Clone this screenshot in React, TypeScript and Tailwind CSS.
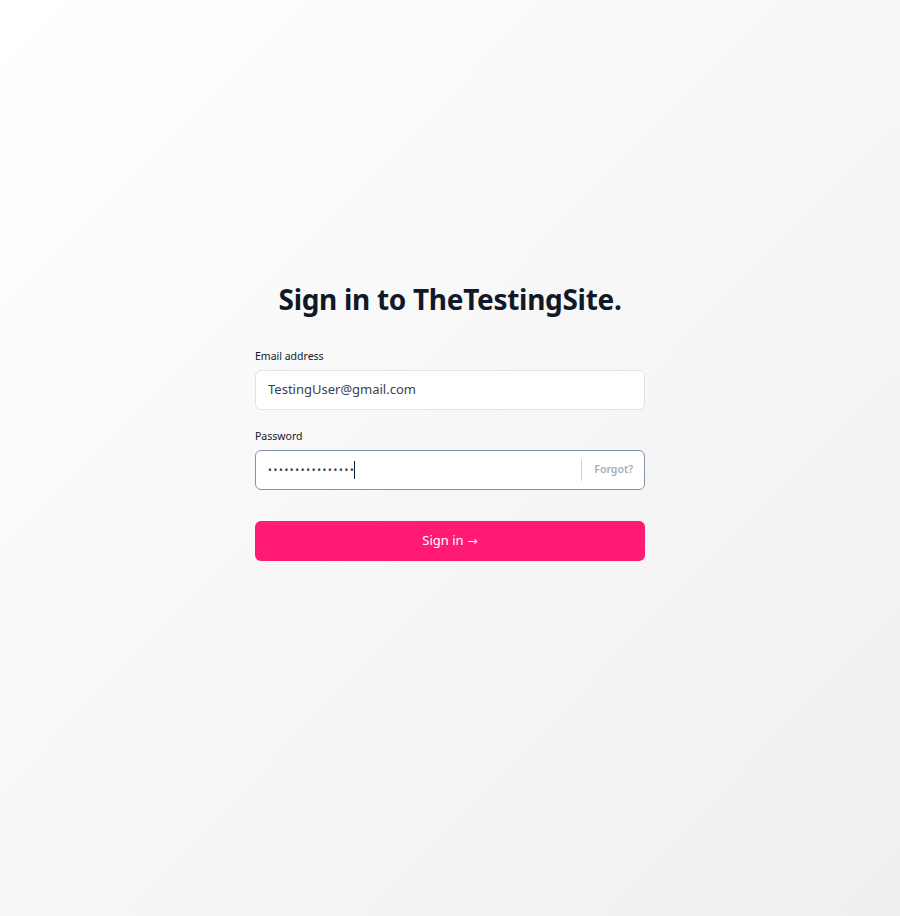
import React from "react";

export default function App() {
  return (
    <div
      className="min-h-[916px] w-full bg-gradient-to-br from-white to-[#efefef] flex flex-col items-center pt-[281px]"
      style={{ fontFamily: '"Noto Sans", "Open Sans", sans-serif' }}
    >
      <h1 className="text-[28px] leading-[36px] font-bold text-[#111827] tracking-[-0.3px]">
        Sign in to TheTestingSite.
      </h1>
      <form className="w-[390px] mt-[31px] flex flex-col" onSubmit={(e) => e.preventDefault()}>
        <label className="text-[10.5px] leading-[16px] text-[#111827]">Email address</label>
        <div className="mt-[6px] h-[40px] rounded-[6px] border border-[#e2e3e5] bg-white flex items-center px-[12px]">
          <span className="text-[13px] text-[#374151]">TestingUser@gmail.com</span>
        </div>
        <label className="mt-[18px] text-[10.5px] leading-[16px] text-[#111827]">Password</label>
        <div className="mt-[6px] h-[40px] rounded-[6px] border border-[#8392a5] bg-white flex items-center pl-[12px] pr-[11px]">
          <div className="flex-1 flex items-center">
            <span className="text-[10px] tracking-[1.7px] text-[#334155] leading-none">••••••••••••••••</span>
            <span className="w-[1px] h-[18px] bg-[#111827] ml-[-1px]" />
          </div>
          <span className="w-px h-[22px] bg-[#d1d5db] mr-[12px]" />
          <span className="text-[10.5px] font-semibold text-[#a7adb6]">Forgot?</span>
        </div>
        <button
          type="submit"
          className="mt-[31px] h-[40px] rounded-[6px] bg-[#ff1a74] text-white text-[13px] flex items-center justify-center gap-[4px]"
        >
          <span>Sign in</span>
          <span style={{ fontFamily: '"DejaVu Sans", sans-serif' }} className="text-[12px]">→</span>
        </button>
      </form>
    </div>
  );
}
